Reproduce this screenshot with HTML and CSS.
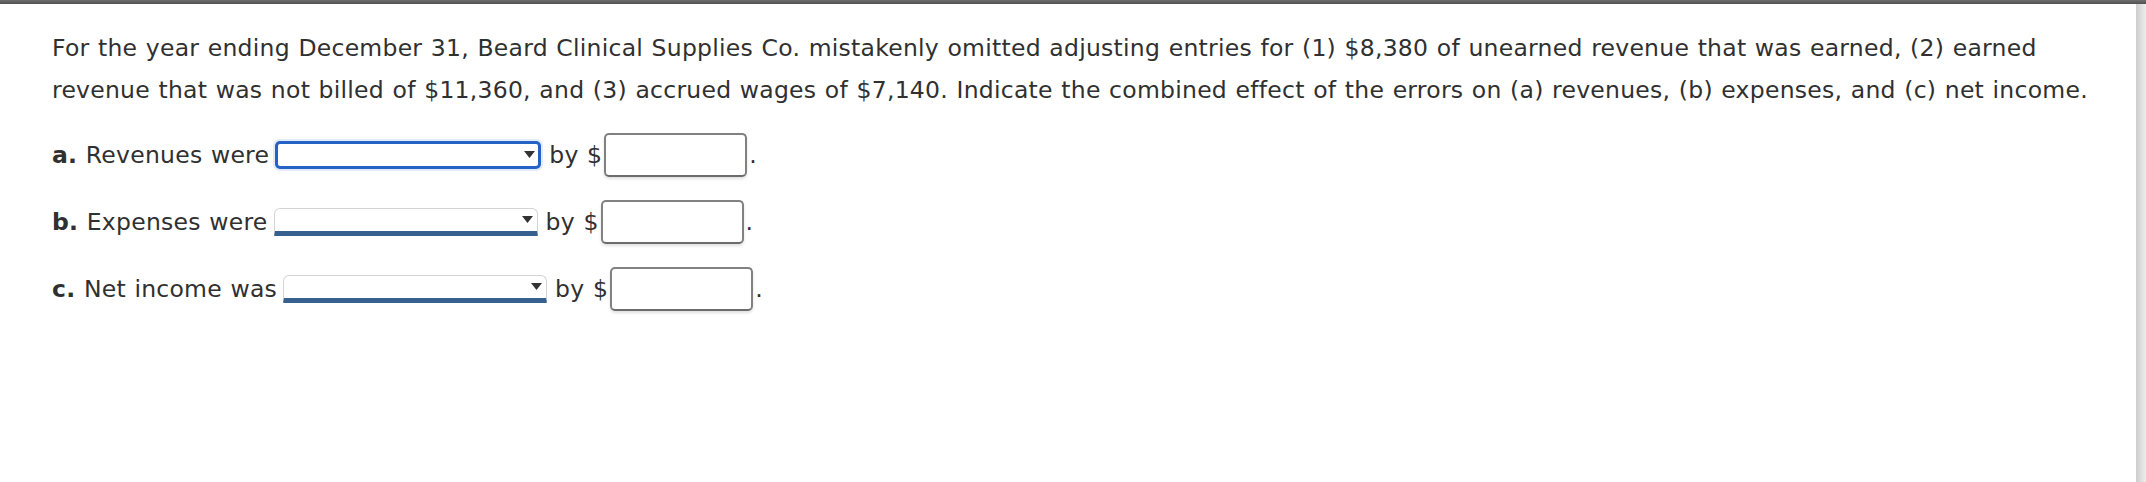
FILE: index.html
```html
<!DOCTYPE html>
<html lang="en">
<head>
<meta charset="utf-8">
<title>Adjusting entries question</title>
<link rel="stylesheet" href="styles.css">
</head>
<body>
<div class="topbar"></div>
<div class="frame">
  <main class="content">
    <p class="question">For the year ending December 31, Beard Clinical Supplies Co. mistakenly omitted adjusting entries for (1) $8,380 of unearned revenue that was earned, (2) earned revenue that was not billed of $11,360, and (3) accrued wages of $7,140. Indicate the combined effect of the errors on (a) revenues, (b) expenses, and (c) net income.</p>

    <div class="row row-first">
      <span class="label"><b>a.</b> Revenues were</span>
      <span class="select focused"><svg class="caret" width="11" height="7" viewBox="0 0 11 7"><polygon points="0,0 11,0 5.5,7"/></svg></span>
      <span class="by">by $</span>
      <input class="amount" type="text" aria-label="Revenues amount">
      <span class="period">.</span>
    </div>

    <div class="row">
      <span class="label"><b>b.</b> Expenses were</span>
      <span class="select plain"><svg class="caret" width="11" height="7" viewBox="0 0 11 7"><polygon points="0,0 11,0 5.5,7"/></svg></span>
      <span class="by">by $</span>
      <input class="amount" type="text" aria-label="Expenses amount">
      <span class="period">.</span>
    </div>

    <div class="row">
      <span class="label"><b>c.</b> Net income was</span>
      <span class="select plain"><svg class="caret" width="11" height="7" viewBox="0 0 11 7"><polygon points="0,0 11,0 5.5,7"/></svg></span>
      <span class="by">by $</span>
      <input class="amount" type="text" aria-label="Net income amount">
      <span class="period">.</span>
    </div>
  </main>
  <div class="gutter"></div>
</div>
</body>
</html>
```

FILE: styles.css
```css
html, body {
  margin: 0;
  padding: 0;
  background: #ffffff;
}

body {
  font-family: "DejaVu Sans", Verdana, sans-serif;
  font-size: 23.5px;
  letter-spacing: 0.25px;
  word-spacing: 0.8px;
  color: #303030;
  overflow: hidden;
}

.topbar {
  height: 4px;
  background: linear-gradient(#6e6e6e, #505050);
}

.frame {
  display: flex;
  height: 478px;
}

.content {
  flex: 1;
  padding: 23px 30px 0 52px;
}

.gutter {
  width: 10px;
  background: linear-gradient(to right, #cdcdcd, #eeeeee);
}

.question {
  margin: 0;
  line-height: 42px;
}

.row {
  display: flex;
  align-items: center;
  height: 67px;
}

.row-first {
  margin-top: 10px;
}

.label b {
  font-weight: bold;
}

.select {
  box-sizing: border-box;
  width: 264px;
  height: 28px;
  margin-left: 6px;
  display: flex;
  align-items: center;
  justify-content: flex-end;
  padding-right: 4px;
  background: #ffffff;
}

.select.focused {
  width: 266px;
  border: 3px solid #2462c6;
  border-radius: 5px;
  box-shadow: 0 0 0 2px #e2ebf8;
  padding-right: 3px;
}

.select.plain {
  border: 1px solid #d4d4d4;
  border-bottom: 5px solid #36608d;
  border-radius: 6px 6px 1px 1px;
}

.caret {
  display: block;
  fill: #333333;
}

.by {
  margin-left: 8px;
}

.amount {
  box-sizing: border-box;
  width: 143px;
  height: 44px;
  margin: 0 0 0 2px;
  padding: 0 6px;
  border: 2px solid #818181;
  border-bottom-color: #6c6c6c;
  border-radius: 5px;
  background: #ffffff;
  box-shadow: 0 2px 3px rgba(0, 0, 0, 0.12);
  font: inherit;
  outline: none;
}

.period {
  margin-left: 2px;
}
```
